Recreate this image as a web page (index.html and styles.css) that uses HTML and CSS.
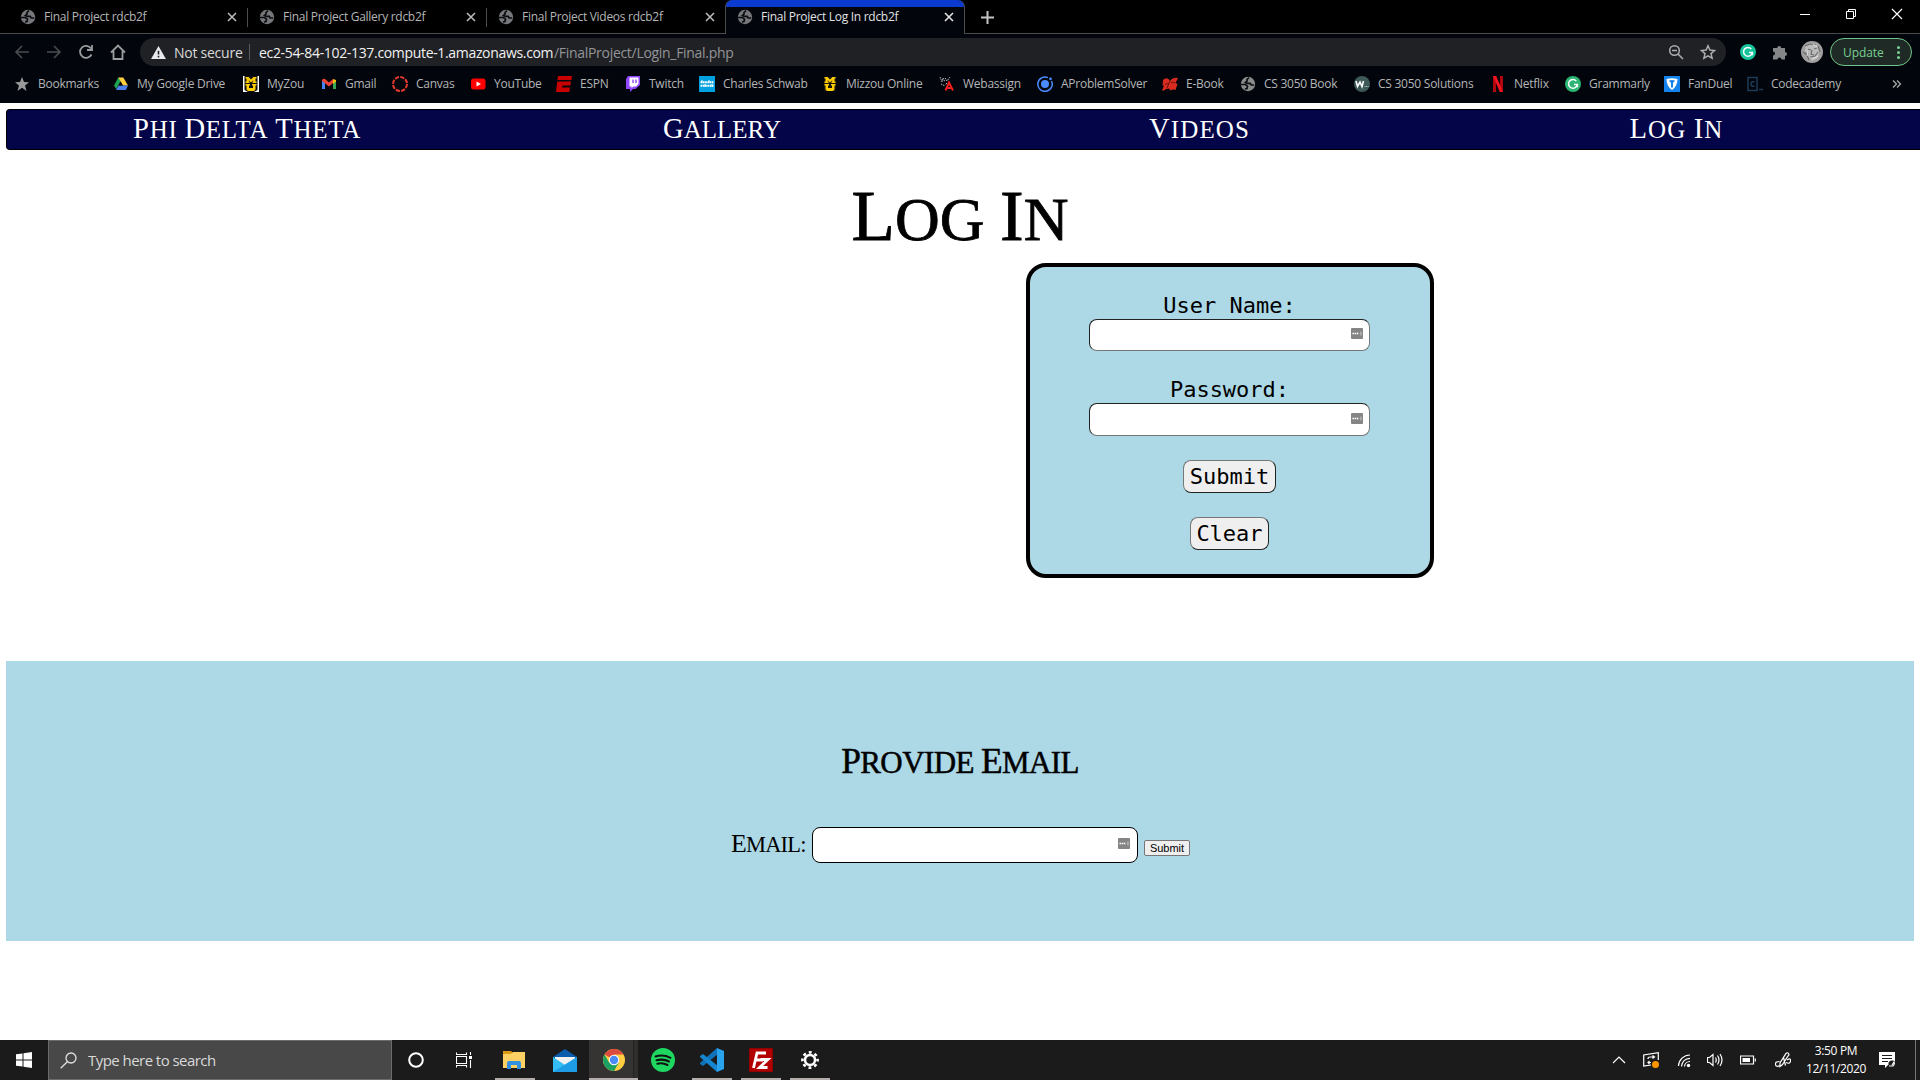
FILE: index.html
```html
<!DOCTYPE html>
<html lang="en">
<head>
<meta charset="utf-8">
<title>Final Project Log In rdcb2f</title>
<link rel="stylesheet" href="styles.css">
</head>
<body>
<svg class="defs" aria-hidden="true">
  <symbol id="globe" viewBox="0 0 16 16"><circle cx="8" cy="8" r="7.200" fill="currentColor"/><path d="M1 8.500h4.500l2 1.700-.5 2.300-2 .5M9 1.500 7 3.500v1.700L5.500 6.500l2 .8h2.700l1 1.700h3" fill="none" stroke="#0a0c10" stroke-width="1.700"/></symbol>
  <symbol id="close" viewBox="0 0 10 10"><path d="m1 1 8 8M9 1 1 9" fill="none" stroke="currentColor" stroke-width="1.600"/></symbol>
  <symbol id="mu" viewBox="0 0 16 16"><path d="M2.500 1h3L8 3.500 10.500 1h3v1.500h-1V5.500h1V7H9.500V5.500h.7V4.200L8 6.500 5.800 4.200v1.300h.7V7h-4V5.500h1V2.500h-1zM2.500 8h4.500v1.500H6V12h4V9.500H9V8h4.500v1.500h-1v4L11 15H5l-1.500-1.500v-4h-1z" fill="#ffce00"/></symbol>
  <symbol id="gram" viewBox="0 0 16 16"><circle cx="8" cy="8" r="8" fill="currentColor"/><path d="M11.300 5A4.400 4.400 0 1 0 12.300 8.500H9M12.400 8.300v3" fill="none" stroke="#fff" stroke-width="1.500"/></symbol>
  <symbol id="keys" viewBox="0 0 12 11"><rect width="12" height="11" rx="1" fill="#858585"/><path d="M1.500 5.500H8" stroke="#fff" stroke-width="1.500" stroke-dasharray="1.500 .6"/><path d="M10 3.500v4" stroke="#ccc"/></symbol>
</svg>

<header class="browser">
  <div class="tabs">
    <div class="tab"><svg class="i16"><use href="#globe"/></svg><span>Final Project rdcb2f</span><svg class="x"><use href="#close"/></svg></div>
    <div class="tab"><svg class="i16"><use href="#globe"/></svg><span>Final Project Gallery rdcb2f</span><svg class="x"><use href="#close"/></svg></div>
    <div class="tab last"><svg class="i16"><use href="#globe"/></svg><span>Final Project Videos rdcb2f</span><svg class="x"><use href="#close"/></svg></div>
    <div class="tab active"><svg class="i16"><use href="#globe"/></svg><span>Final Project Log In rdcb2f</span><svg class="x"><use href="#close"/></svg></div>
    <svg class="plus" viewBox="0 0 13 13"><path d="M6.500 0v13M0 6.500h13" stroke="#c4c4c4" stroke-width="2"/></svg>
    <div class="win">
      <svg viewBox="0 0 12 12"><path d="M1 6.500h10" stroke="#fff"/></svg>
      <svg viewBox="0 0 12 12"><path d="M1.500 3.500h7v7h-7zM3.500 3V1.500h7v7H9" fill="none" stroke="#fff"/></svg>
      <svg viewBox="0 0 12 12"><path d="m1 1 10 10M11 1 1 11" stroke="#fff" stroke-width="1.200"/></svg>
    </div>
  </div>

  <div class="toolbar">
    <svg class="tool dim" viewBox="0 0 16 16"><path d="M15 8H2M8 2 2 8l6 6"/></svg>
    <svg class="tool dim" viewBox="0 0 16 16"><path d="M1 8h13M8 2l6 6-6 6"/></svg>
    <svg class="tool" viewBox="0 0 16 16"><path d="M13.500 10.500A6 6 0 1 1 13 4.500M14 1v5H9"/></svg>
    <svg class="tool" viewBox="0 0 16 16"><path d="M1 8.500 8 1.500l7 7M3.500 7v8h9V7"/></svg>
    <div class="omnibox">
      <svg class="warn" viewBox="0 0 16 14"><path d="M8 0l8 14H0z" fill="#e8eaed"/><path d="M8 5v4.200M8 10.500v1.800" stroke="#202124" stroke-width="1.700"/></svg>
      <span class="insecure">Not secure</span>
      <span class="bar"></span>
      <span class="host">ec2-54-84-102-137.compute-1.amazonaws.com</span><span class="path">/FinalProject/Login_Final.php</span>
      <svg class="mag" viewBox="0 0 16 16"><circle cx="6.500" cy="6.500" r="4.800"/><path d="m10 10 5 5M4 6.500h5"/></svg>
      <svg class="star" viewBox="0 0 16 16"><path d="m8 1.800 1.900 4.300 4.600.4-3.500 3.100 1.100 4.600L8 11.800l-4.100 2.400L5 9.600 1.500 6.500l4.600-.4z"/></svg>
    </div>
    <svg class="gr"><use href="#gram"/></svg>
    <svg class="puzzle" viewBox="0 0 16 16"><path d="M1 4h4.200a2 2 0 1 1 4 0H13v4a2 2 0 1 1 0 4v3.500H9.500a2 2 0 0 0-4 0H1v-4a2 2 0 0 0 0-4z" fill="#858687"/></svg>
    <svg class="avatar" viewBox="0 0 22 22"><circle cx="11" cy="11" r="11" fill="#a0a0a0"/><path d="M4 6 9 2l7 2 3 5-2 8-6 3-4-4 1-5-3-2z" fill="#bcbcbc"/><path d="m7 8 3 1M13 8l3-1M11 9l-1 4 3 1M9 16l5-1 3-4M4 5l5-2 6 1M2 11l4 3 2 5M17 5l2 6" fill="none" stroke="#6c6c6c" stroke-width="1.200"/><path d="m4 9 3 2-1 4M12 3l4 3M12 18l5-3" stroke="#e4e4e4" fill="none"/></svg>
    <div class="update"><span>Update</span><i></i></div>
  </div>

  <nav class="bookmarks">
    <a><svg viewBox="0 0 16 16"><path d="m8 1 2 5 5 .3-4 3.300L12.500 15 8 11.800 3.500 15 5 9.600 1 6.300 6 6z" fill="#9a9a9a"/></svg><span>Bookmarks</span></a>
    <a><svg viewBox="0 0 16 16"><path d="M5.300 1.500 1 9.500 3.200 13 8 4.500z" fill="#21a354"/><path d="M5.300 1.500h5l4.700 8h-5z" fill="#ffcf3f"/><path d="M5.500 9.500H15L12.800 14H3z" fill="#4a80f0"/><path d="m7.800 6-2 3.500h4z" fill="#05070c"/></svg><span>My Google Drive</span></a>
    <a><svg viewBox="0 0 16 16"><path fill="#fff" d="M0 0h16v16H0z"/><path d="M1.500 0h13v14L11 16H5l-3.500-2z" fill="#111"/><use href="#mu" width="16" height="16"/></svg><span>MyZou</span></a>
    <a><svg viewBox="0 0 16 16"><path d="M1 4v9h3V7z" fill="#4285f4"/><path d="M12 7v6h3V4z" fill="#34a853"/><path d="M1 4q1-2 3-1l4 3.500L12 3v4l-4 3.500L1 5z" fill="#ea4335"/><path d="m12 3 3 1v1.500L12 8z" fill="#fbbc04"/></svg><span>Gmail</span></a>
    <a><svg viewBox="0 0 16 16"><circle cx="8" cy="8" r="7" fill="none" stroke="#e23b2d" stroke-width="2" stroke-dasharray="4.300 1.200"/></svg><span>Canvas</span></a>
    <a><svg viewBox="0 0 16 16"><rect x="1" y="2.500" width="14.500" height="11" rx="2.500" fill="red"/><path d="m6.500 5.500 4.500 2.500-4.500 2.500z" fill="#fff"/></svg><span>YouTube</span></a>
    <a><svg viewBox="0 0 16 16"><path d="M2 0h14l-.6 4H1.400zM1.200 5.500H15l-.7 4H6.500l-.4 2H14l-.7 4.500H0z" fill="#c80000"/></svg><span>ESPN</span></a>
    <a><svg viewBox="0 0 16 16"><path d="m3 0h12v9l-4.500 4H8l-3 3v-3H1V3z" fill="#9147ff"/><path d="M4.500 1.500h9V8l-2.500 2.500H8.500L6.500 12v-1.500h-2z" fill="#fff"/><path d="M8 3.500v3.500M11 3.500v3.500" stroke="#9147ff" stroke-width="1.400"/></svg><span>Twitch</span></a>
    <a><svg viewBox="0 0 16 16"><path fill="#009fdf" d="M0 0h16v16H0z"/><path d="M1.500 6.300h13M1.500 9.800h13" stroke="#fff" stroke-width="2" stroke-dasharray="1.800 .5"/><path d="M3 4v3M10 4v3M6 8v3M13 8v3" stroke="#fff"/></svg><span>Charles Schwab</span></a>
    <a><svg viewBox="0 0 16 16"><path d="M2 1h12v14H2z" fill="#18150a"/><use href="#mu" width="16" height="16"/></svg><span>Mizzou Online</span></a>
    <a><svg viewBox="0 0 16 16"><path d="m1 1 2 5 1-4 2 4M6 2l2 3 3-4M2 8l4 2M8 7l-2 2" stroke="#bbb" fill="none" stroke-dasharray="1.500 .8"/><path d="m6.500 14.500 3.500-8 4 8M8 12h5" stroke="#f02020" stroke-width="2" fill="none"/></svg><span>Webassign</span></a>
    <a><svg viewBox="0 0 16 16"><circle cx="8" cy="8" r="4" fill="#4a8cff"/><path d="M11 1.600A7.200 7.200 0 1 0 14.500 5" fill="none" stroke="#4a8cff" stroke-width="1.500"/><circle cx="13.500" cy="2.800" r="1.400" fill="#4a8cff"/></svg><span>AProblemSolver</span></a>
    <a><svg viewBox="0 0 16 16"><path d="M1 4q3-3 5.500-1L8 5q3-4 8-3l-2.500 5 2 1-2 6q-3-1-5 .5L7 12.500q-3 0-5 2H0l2-5H.500z" fill="#d92b1f"/><path d="m8 5-3 7M3 8.500q2-1.500 4-.5M9 7q2-1.500 4-.500" stroke="#6b120c" fill="none"/></svg><span>E-Book</span></a>
    <a class="grey"><svg><use href="#globe"/></svg><span>CS 3050 Book</span></a>
    <a><svg viewBox="0 0 16 16"><circle cx="8" cy="8" r="8" fill="#3d5a58"/><path d="m2 5 1.500 5.500L6 6l2 4.500L9.500 5" stroke="#fff" stroke-width="1.600" fill="none"/><path d="M10.500 10.500h4" stroke="#b8c5c4" stroke-dasharray="1 .6"/></svg><span>CS 3050 Solutions</span></a>
    <a><svg viewBox="0 0 16 16"><path d="M4.500 0v16M11.500 0v16" stroke="#b1060f" stroke-width="3"/><path d="M3 0h3.200L13 16H9.800z" fill="#f01420"/></svg><span>Netflix</span></a>
    <a class="green"><svg><use href="#gram"/></svg><span>Grammarly</span></a>
    <a><svg viewBox="0 0 16 16"><path fill="#1483ee" d="M0 0h16v16H0z"/><path d="M2.500 3Q8 1.500 13.500 3q.2 7-5.500 11Q2.300 10 2.500 3z" fill="#fff"/><path d="M5 4.500q3-.8 6 0L9 7v4l-1 1-1-1V7z" fill="#1483ee"/></svg><span>FanDuel</span></a>
    <a><svg viewBox="0 0 16 16"><path d="M1 1.500h9v13H1zM7.500 6Q4 5 4 8t3.500 2M12 13.500h4" fill="none" stroke="#1d3c56" stroke-width="1.500"/></svg><span>Codecademy</span></a>
    <svg class="more" viewBox="0 0 10 8"><path d="m1 .5 3.500 3.500L1 7.500m4-7L8.500 4 5 7.500" fill="none" stroke="#aaa" stroke-width="1.300"/></svg>
  </nav>
</header>

<main>
  <nav class="menu caps">
    <a class="home"><b>Phi</b> <b>Delta</b> <b>Theta</b></a><a class="gallery"><b>Gallery</b></a><a class="videos"><b>Videos</b></a><a class="signin"><b>Log</b> <b>In</b></a>
  </nav>
  <h1 class="caps"><b>Log</b> <b>In</b></h1>
  <form class="login">
    <label>User Name:</label>
    <div class="field"><input type="text"><svg><use href="#keys"/></svg></div>
    <label>Password:</label>
    <div class="field second"><input type="password"><svg><use href="#keys"/></svg></div>
    <button type="button" class="submit">Submit</button>
    <button type="button" class="clear">Clear</button>
  </form>
  <section class="contact">
    <h2 class="caps"><b>Provide</b> <b>Email</b></h2>
    <div class="row">
      <label class="caps"><b>Email:</b></label>
      <div class="field"><input type="text"><svg><use href="#keys"/></svg></div>
      <button type="button">Submit</button>
    </div>
  </section>
</main>

<footer class="taskbar">
  <div class="start"><svg width="16" height="16" viewBox="0 0 16 16"><path d="M0 2.300 6.500 1.400v6.100H0zM7.500 1.200 16 0v7.500H7.500zM0 8.500h6.500v6.100L0 13.700zM7.500 8.500H16V16l-8.500-1.200z" fill="#fff"/></svg></div>
  <div class="search"><svg width="17" height="17" viewBox="0 0 17 17"><circle cx="11" cy="6" r="5" fill="none" stroke="#e0e0e0" stroke-width="1.300"/><path d="M7.300 9.700.7 16.300" stroke="#e0e0e0" stroke-width="1.300"/></svg><span>Type here to search</span></div>
  <div class="apps">
    <div class="app"><svg width="16" height="16" viewBox="0 0 16 16"><circle cx="8" cy="8" r="6.800" fill="none" stroke="#fff" stroke-width="2"/></svg></div>
    <div class="app"><svg width="16" height="16" viewBox="0 0 16 16"><path d="M.5.500v2h10v-2M.5 15.500v-2h10v2M.5 4.500h10v7H.5zM14.500 0v3M14.500 8v8" fill="none" stroke="#fff" stroke-width="1.100"/><path fill="#fff" d="M13 4h3v3h-3z"/></svg></div>
    <div class="app open"><svg width="22" height="20" viewBox="0 0 22 20"><path d="M0 1h8l2 2h11v3H0z" fill="#d99a13"/><path d="M0 4h8l2-2h12v16H0z" fill="#fcd163"/><path d="M4 19v-6q0-2 2-2h10q2 0 2 2v6h-4v-4H8v4z" fill="#3391e0"/></svg></div>
    <div class="app"><svg width="24" height="23" viewBox="0 0 24 23"><path d="M0 8 12 0l12 8v5H0z" fill="#0b5cad"/><path d="M2 8h20v9H2z" fill="#f1f1f1"/><path d="M0 8l12 8 12-8v15H0z" fill="#33bdf2"/><path d="M0 23 24 8v15z" fill="#1e9ce6"/></svg></div>
    <div class="app open current"><svg width="22" height="22" viewBox="0 0 22 22"><circle cx="11" cy="11" r="11" fill="#ffcd41"/><path d="M11 11 1.500 5.500A11 11 0 0 1 20.500 5.500H11z" fill="#dd4b3e"/><path d="M1.500 5.500A11 11 0 0 0 11 22l4.800-8.300L11 11 6.300 13.700z" fill="#1ba160"/><circle cx="11" cy="11" r="5.200" fill="#fff"/><circle cx="11" cy="11" r="4.200" fill="#4a8bf5"/></svg></div>
    <div class="app"><svg width="24" height="24" viewBox="0 0 24 24"><circle cx="12" cy="12" r="12" fill="#1ed760"/><path d="M4.500 8.500q8-2.300 15 1.300M5.500 12.300q7-1.800 12.500 1.200M6.300 15.800q5.500-1.300 10.200 1.200" fill="none" stroke="#111" stroke-width="2" stroke-linecap="round"/></svg></div>
    <div class="app open"><svg width="24" height="24" viewBox="0 0 24 24"><path d="M17 0 18 6 3 18l-3-2v-1z" fill="#0f72b8"/><path d="m3 6-3 2v1l17 15 1-6z" fill="#1585cf"/><path d="m17 0 7 3v18l-7 3z" fill="#2aa3ee"/></svg></div>
    <div class="app open"><svg width="24" height="24" viewBox="0 0 24 24"><path d="M0 0h24v24H0z" fill="#b30000"/><path d="M.5.500h23v23H.5z" fill="none" stroke="#7b0000" stroke-dasharray="2 1"/><path d="M4.500 20 8 5h9M6 12h8M11.500 11.500h7.500L10.500 19.500h8" fill="none" stroke="#fff" stroke-width="2.800"/></svg></div>
    <div class="app open"><svg width="18" height="18" viewBox="0 0 18 18"><circle cx="9" cy="9" r="5" fill="none" stroke="#fff" stroke-width="2.500"/><circle cx="9" cy="9" r="7.600" fill="none" stroke="#fff" stroke-width="2.600" stroke-dasharray="2.970 3" stroke-dashoffset="1.500"/></svg></div>
  </div>
  <div class="tray">
    <svg viewBox="0 0 16 16"><path d="m2 11 6-6 6 6"/></svg>
    <svg viewBox="0 0 16 16"><path d="M8 13 .7 14V3L15.300.700V8M9.500 3.500l2 1.500-2 1.500M11 5H7q-2 0-2 2M6.500 12 5 10.500l1.500-1.500M5 10.500h3"/><circle cx="12.500" cy="12.500" r="3.500" fill="#ff9500" stroke="none"/></svg>
    <svg viewBox="0 0 16 16"><path d="M2.500 14A11.500 11.500 0 0 1 14 3M5.500 14.500A8.500 8.500 0 0 1 14 6.300M8.500 14.500A5.500 5.500 0 0 1 14 9.500"/><circle cx="12.500" cy="13.500" r="1.700" fill="#fff" stroke="none"/></svg>
    <svg viewBox="0 0 16 16"><path d="M.5 5.500h2L6 2.500v11l-3.500-3h-2zM8.500 5.500q1.500 2.500 0 5M10.500 3.500q3 4.500 0 9M13 2q4 6 0 12"/></svg>
    <svg viewBox="0 0 16 16"><path d="M.5 4h13v8H.5zM15.300 6.500v3"/><path d="M2.500 6h7.500v4H2.500z" fill="#fff" stroke="none"/></svg>
    <svg viewBox="0 0 16 16"><path d="M4.500 9.500Q0 9.500.5 12.500t4.500 1M5 14.500V11l6-9.500q1.500-1.500 2.500 0T13 4L7.500 12.500zM8.500 5.500l2 8M12 8q4-2.500 3.500 1T11 10.500"/></svg>
    <div class="clock"><span>3:50 PM</span><span>12/11/2020</span></div>
    <svg viewBox="0 0 16 16"><path d="M0 0h16v13h-7L6 16v-3H0z" fill="#fff" stroke="none"/><path d="M3 3.500h10M3 6.500h10M3 9.500h6" stroke="#1b1b1b"/><circle cx="13" cy="12" r="3.600" fill="#1b1b1b" stroke="none"/><path d="M10 14h4q2-1.500 1-4l-2 3"/></svg>
  </div>
</footer>
</body>
</html>
```
FILE: styles.css
```css
* { box-sizing: border-box; }
body { margin: 0; width: 1920px; height: 1080px; overflow: hidden; display: flex; flex-direction: column; background: #fff; font-family: "Open Sans", "Noto Sans", sans-serif; }
svg { flex: none; display: block; }
.defs { position: absolute; width: 0; height: 0; }

/* browser chrome */
.browser { height: 103px; background: #02050c; color: #b4b5b6; font-size: 12px; white-space: nowrap; }
.tabs { display: flex; height: 34px; background: #000; border-bottom: 1px solid #4a4b4c; padding-left: 8px; }
.tab { width: 239px; display: flex; align-items: center; padding: 0 10px 0 12px; position: relative; letter-spacing: -0.28px; }
.tab::after { content: ""; position: absolute; right: -1px; top: 8px; width: 1px; height: 19px; background: #4c4d4e; }
.tab.last::after, .tab.active::after { display: none; }
.tab .i16 { width: 16px; height: 16px; color: #75777a; margin-right: 8px; }
.tab .x { width: 10px; height: 10px; margin-left: auto; color: #bbb; }
.tab.active { width: 240px; background: linear-gradient(#0a3ad0 7px, #02050c 7px); height: 34px; color: #e0e1e2; border: solid #4a4b4c; border-width: 0 1px; border-radius: 7px 7px 0 0; padding: 0 10px 1px 11px; }
.tab.active .x { color: #e4e4e4; }
.plus { width: 13px; height: 13px; margin: 11px 0 0 16px; }
.win { margin-left: auto; display: flex; gap: 34px; padding: 8px 17px 0 0; }
.win svg { width: 12px; height: 12px; }

.toolbar { display: flex; align-items: center; height: 36px; padding-left: 14px; }
.tool { width: 16px; height: 16px; margin-right: 16px; fill: none; stroke: #9b9c9e; stroke-width: 1.8; }
.tool.dim { stroke: #4a4c4f; stroke-width: 1.6; }
.omnibox { width: 1586px; height: 28px; margin-left: -2px; border-radius: 14px; background: #202124; display: flex; align-items: center; padding: 0 10px 0 11px; font-size: 14px; }
.warn { width: 15px; height: 13px; margin-right: 8px; }
.insecure { width: 67px; color: #d8d9db; letter-spacing: -0.25px; }
.bar { width: 1px; height: 16px; background: #5a5b5e; margin: 0 9px 0 8px; }
.host { width: 295px; color: #f1f1f2; letter-spacing: -0.33px; }
.path { color: #929498; letter-spacing: -0.3px; }
.mag, .star { fill: none; stroke: #adaeb0; stroke-width: 1.5; width: 16px; height: 16px; }
.mag { margin-left: auto; }
.star { margin-left: 16px; }
.gr { width: 16px; height: 16px; color: #15c39a; margin-left: 14px; }
.puzzle { width: 16px; height: 16px; margin-left: 16px; }
.avatar { width: 22px; height: 22px; margin-left: 13px; }
.update { width: 82px; height: 28px; margin-left: 7px; border: 1px solid #6fc68a; border-radius: 14px; background: #1f2925; color: #79cf93; display: flex; align-items: center; padding-left: 12px; font-size: 12px; letter-spacing: -0.1px; }
.update span { width: 54px; }
.update i { width: 3px; height: 3px; border-radius: 50%; background: #79cf93; box-shadow: 0 -5px #79cf93, 0 5px #79cf93; }

.bookmarks { height: 28px; display: grid; align-items: center; padding-left: 14px; letter-spacing: -0.25px;
  grid-template-columns: 99px 130px 78px 71px 78px 86px 69px 74px 123px 117px 98px 125px 78px 114px 136px 75px 99px 83px 145px 10px; }
.bookmarks a { display: flex; align-items: center; gap: 8px; }
.bookmarks a svg { width: 16px; height: 16px; }
.bookmarks span { position: relative; top: -.5px; }
.grey svg { color: #8b8b8b; }
.green svg { color: #2bb673; }
.more { width: 10px; height: 8px; }

/* page */
main { flex: 1; padding: 6px 6px 0; }
.caps { font-family: "Liberation Serif", serif; text-transform: uppercase; white-space: nowrap; }
.caps b { font-weight: inherit; display: inline-block; }
.caps b::first-letter { font-size: 1.145em; }
.menu { width: 1914px; height: 41px; background: #040448; border: 1px solid #000; border-right: 0; border-radius: 4px 0 0 4px; color: #fff; font-size: 25px; display: grid; grid-template-columns: 480px 474px 479px 474px; text-align: center; line-height: 36px; }
.home { letter-spacing: .72px; }
.gallery { padding-right: 4px; }
.videos { letter-spacing: 1.1px; padding-right: 2px; }
.signin { letter-spacing: 1.1px; padding-right: 1px; }
h1 { margin: 34px 0 0; height: 79px; line-height: 65px; font-size: 62px; font-weight: 400; text-align: center; -webkit-text-stroke: .8px #000; }
.login { width: 408px; height: 315px; margin-left: 1020px; border: 4px solid #000; border-radius: 20px; background: #add8e6; padding: 24px 1px 0 0; display: flex; flex-direction: column; align-items: center; font: 22px/28px "DejaVu Sans Mono", monospace; color: #000; }
.login label { line-height: 30px; height: 28px; }
.field { position: relative; }
.field svg { position: absolute; right: 7px; top: 9px; width: 12px; height: 11px; }
.login input { display: block; width: 281px; height: 32px; border: 1px solid #777; border-color: #222 #777 #777 #222; border-radius: 8px; background: #fff; }
.login .field { margin-bottom: 24px; }
.login .second { margin-bottom: 24px; }
.login .second input { height: 33px; }
.login .second svg { top: 10px; }
.login button { height: 33px; padding: 1px 0 0; font: 22px/30px "DejaVu Sans Mono", monospace; color: #000; background: #efefef; border: 1px solid; border-color: #777 #222 #222 #777; border-radius: 8px; margin-bottom: 24px; }
.submit { width: 93px; }
.clear { width: 79px; }
.contact { margin-top: 83px; height: 280px; background: #add8e6; padding-top: 78px; }
h2 { margin: 0; height: 88px; line-height: 44px; text-align: center; font-size: 31px; font-weight: 400; letter-spacing: -.6px; -webkit-text-stroke: .5px #000; }
.row { display: flex; padding-left: 725px; }
.row label { width: 81px; font-size: 22.5px; line-height: 34px; letter-spacing: -.8px; }
.row input { display: block; width: 326px; height: 36px; border: 1px solid #000; border-radius: 8px; background: #fff; }
.row .field svg { right: 8px; top: 11px; }
.row button { width: 46px; height: 16px; margin: 13px 0 0 6px; padding: 0; font: 11px/13px "Liberation Sans", sans-serif; color: #000; background: #efefef; border: 1px solid #767676; border-radius: 2px; }

/* taskbar */
.taskbar { height: 40px; background: #1b1b1b; display: flex; color: #fff; }
.start { width: 48px; display: grid; place-items: center; }
.search { width: 344px; background: #484848; border: 1px solid #6c6c6c; display: flex; align-items: center; gap: 11px; padding-left: 11px; color: #d9d9d9; font-size: 15px; letter-spacing: -.55px; }
.apps { display: flex; }
.app { width: 49px; display: grid; place-items: center; position: relative; }
.app:nth-child(-n+2) { width: 48px; }
.app:nth-child(3) { width: 52px; }
.app.open::after { content: ""; position: absolute; left: 5px; right: 4px; bottom: 0; height: 2px; background: #b3aeab; }
.app:nth-child(3).open::after { left: 7px; right: 5px; }
.app.current { background: linear-gradient(90deg, #363432 44px, #222 44px, #222 45px, #302e2d 45px); }
.app.current.open::after { left: 0; right: 0; }
.tray { margin-left: auto; display: grid; grid-template-columns: 32px 33px 31px 33px 35px 32px 72px 16px; align-items: center; width: 309px; position: relative; }
.tray::after { content: ""; position: absolute; right: 4px; top: 0; width: 1px; height: 40px; background: #777; }
.tray svg { width: 16px; height: 16px; fill: none; stroke: #fff; stroke-width: 1.2; }
.clock { display: flex; flex-direction: column; align-items: center; width: 58px; font-size: 12px; line-height: 18px; letter-spacing: -.35px; }
```
